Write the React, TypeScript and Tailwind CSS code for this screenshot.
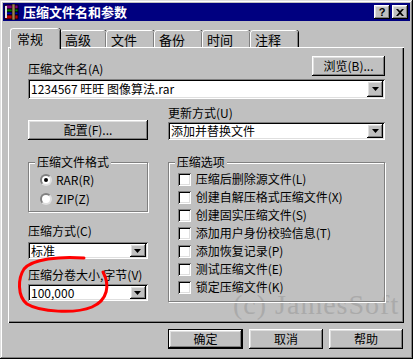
import type { ReactNode } from 'react'

const raised =
  'shadow-[inset_-1px_-1px_#000,inset_1px_1px_#fff,inset_-2px_-2px_#808080,inset_2px_2px_#dfdfdf]'
const sunken =
  'shadow-[inset_1px_1px_#808080,inset_-1px_-1px_#fff,inset_2px_2px_#000,inset_-2px_-2px_#dfdfdf]'

function RarIcon() {
  return (
    <svg width="16" height="16" viewBox="0 0 16 16" className="shrink-0">
      <rect x="1" y="1" width="13" height="4" fill="#800080" stroke="#000" strokeWidth="0.8" />
      <rect x="1" y="5" width="13" height="3" fill="#008000" stroke="#000" strokeWidth="0.8" />
      <rect x="1" y="8" width="13" height="3" fill="#0000c0" stroke="#000" strokeWidth="0.8" />
      <rect x="1" y="11" width="13" height="4" fill="#c00000" stroke="#000" strokeWidth="0.8" />
      <rect x="1" y="2" width="2" height="12" fill="#e0e0e0" />
      <rect x="8" y="0" width="3" height="16" fill="#a08050" stroke="#000" strokeWidth="0.6" />
    </svg>
  )
}

function TitleBtn({ children }: { children: ReactNode }) {
  return (
    <div className={`w-[16px] h-[14px] bg-[#c0c0c0] flex items-center justify-center ${raised}`}>
      {children}
    </div>
  )
}

function Arrow() {
  return (
    <div className={`w-[16px] self-stretch bg-[#c0c0c0] flex items-center justify-center ${raised}`}>
      <svg width="7" height="4" viewBox="0 0 7 4">
        <path d="M0 0h7L3.5 4z" fill="#000" />
      </svg>
    </div>
  )
}

function Combo({ value, h }: { value: string; h: string }) {
  return (
    <div className={`flex bg-white p-[2px] ${h} ${sunken}`}>
      <div className="flex-1 flex items-center pl-[1px] text-[12px] leading-[12px] whitespace-nowrap">
        {value}
      </div>
      <Arrow />
    </div>
  )
}

function Button({ children, w, def }: { children: ReactNode; w: string; def?: boolean }) {
  const inner = (
    <div className={`h-full w-full flex items-center justify-center text-[12px] bg-[#c0c0c0] ${raised}`}>
      {children}
    </div>
  )
  if (def) return <div className={`${w} h-[20px] border border-black`}>{inner}</div>
  return <div className={`${w} h-[20px]`}>{inner}</div>
}

function Group({ label, className, children }: { label: string; className: string; children: ReactNode }) {
  return (
    <div className={`relative border border-[#808080] shadow-[1px_1px_#fff,inset_1px_1px_#fff] ${className}`}>
      <span className="absolute -top-[8px] left-[6px] px-[2px] bg-[#c0c0c0] text-[12px] leading-[14px]">{label}</span>
      {children}
    </div>
  )
}

function Radio({ label, checked }: { label: string; checked?: boolean }) {
  return (
    <div className="h-[19px] flex items-center gap-[4px]">
      <div className="w-[12px] h-[12px] rounded-full bg-white border-2 border-t-[#808080] border-l-[#808080] border-b-[#dfdfdf] border-r-[#dfdfdf] flex items-center justify-center">
        {checked && <div className="w-[4px] h-[4px] rounded-full bg-black" />}
      </div>
      <span className="text-[12px] leading-[14px]">{label}</span>
    </div>
  )
}

function Check({ label }: { label: string }) {
  return (
    <div className="h-[18px] flex items-center gap-[5px]">
      <div className={`w-[13px] h-[13px] bg-white ${sunken}`} />
      <span className="text-[12px] leading-[14px] whitespace-nowrap">{label}</span>
    </div>
  )
}

const TABS = [
  { label: '高级', w: 'w-[46px]' },
  { label: '文件', w: 'w-[48px]' },
  { label: '备份', w: 'w-[48px]' },
  { label: '时间', w: 'w-[48px]' },
  { label: '注释', w: 'w-[48px]' },
]

const OPTIONS = [
  '压缩后删除源文件(L)',
  '创建自解压格式压缩文件(X)',
  '创建固实压缩文件(S)',
  '添加用户身份校验信息(T)',
  '添加恢复记录(P)',
  '测试压缩文件(E)',
  '锁定压缩文件(K)',
]

export default function App() {
  return (
    <div className="relative w-[413px] h-[359px] bg-[#c0c0c0] p-[3px] text-black font-['Noto_Sans_CJK_SC','Liberation_Sans',sans-serif] shadow-[inset_-1px_-1px_#000,inset_1px_1px_#dfdfdf,inset_-2px_-2px_#808080,inset_2px_2px_#fff]">
      {/* Title bar */}
      <div className="h-[18px] bg-[#000080] flex items-center pl-[1px] pr-[2px]">
        <RarIcon />
        <span className="ml-[3px] text-white font-bold text-[13px] leading-[16px]">压缩文件名和参数</span>
        <div className="ml-auto flex gap-[2px]">
          <TitleBtn>
            <span className="text-[11px] font-bold leading-none font-['Liberation_Sans',sans-serif]">?</span>
          </TitleBtn>
          <TitleBtn>
            <svg width="8" height="7" viewBox="0 0 8 7">
              <path d="M0 0h2l2 2 2-2h2L5 3.5 8 7H6L4 5 2 7H0l3-3.5z" fill="#000" />
            </svg>
          </TitleBtn>
        </div>
      </div>

      {/* Tabs */}
      <div className="mt-[7px] ml-[7px] flex items-end h-[19px]">
        <div className="relative z-10 w-[50px] h-[21px] -mb-[2px] bg-[#c0c0c0] rounded-t-[3px] border-t border-l border-white shadow-[inset_-1px_0_#808080,1px_0_#000] flex items-start pl-[6px] pt-[2px] text-[13px] leading-[16px]">
          常规
        </div>
        {TABS.map((t) => (
          <div
            key={t.label}
            className={`${t.w} h-[17px] bg-[#c0c0c0] rounded-t-[3px] border-t border-l border-white shadow-[inset_-1px_0_#808080,1px_0_#000] flex items-start pl-[4px] pt-[1px] text-[13px] leading-[15px]`}
          >
            {t.label}
          </div>
        ))}
      </div>

      {/* Panel */}
      <div className="relative ml-[5px] w-[396px] h-[276px] pt-[8px] pl-[20px] pr-[19px] shadow-[inset_1px_1px_#fff,inset_-1px_-1px_#000,inset_-2px_-2px_#808080]">
        <div className="absolute left-[225px] top-[242px] text-[28px] leading-[32px] tracking-[1px] text-[#aaaaaa] font-['Liberation_Serif',serif] whitespace-nowrap">
          (c) JamesSoft
        </div>

        <div className="h-[21px] flex justify-between items-end">
          <span className="text-[12px] leading-[14px]">压缩文件名(A)</span>
          <Button w="w-[73px]">浏览(B)...</Button>
        </div>
        <div className="mt-[3px]">
          <Combo value="1234567 旺旺 图像算法.rar" h="h-[20px]" />
        </div>

        <div className="mt-[7px] flex gap-[20px] items-end">
          <div className="w-[120px]">
            <Button w="w-[120px]">配置(F)...</Button>
          </div>
          <div className="flex-1">
            <div className="text-[12px] leading-[14px]">更新方式(U)</div>
            <div className="mt-[2px]">
              <Combo value="添加并替换文件" h="h-[18px]" />
            </div>
          </div>
        </div>

        <div className="mt-[22px] flex gap-[20px] items-start">
          <div className="w-[120px]">
            <Group label="压缩文件格式" className="h-[50px] pt-[7px] pl-[11px]">
              <Radio label="RAR(R)" checked />
              <Radio label="ZIP(Z)" />
            </Group>
            <div className="mt-[12px] text-[12px] leading-[14px]">压缩方式(C)</div>
            <div className="mt-[4px]">
              <Combo value="标准" h="h-[17px]" />
            </div>
            <div className="mt-[9px] text-[12px] leading-[14px]">压缩分卷大小,字节(V)</div>
            <div className="mt-[2px]">
              <Combo value="100,000" h="h-[17px]" />
            </div>
          </div>
          <Group label="压缩选项" className="w-[218px] h-[140px] pt-[7px] pl-[9px]">
            {OPTIONS.map((o) => (
              <Check key={o} label={o} />
            ))}
          </Group>
        </div>
      </div>

      {/* Bottom buttons */}
      <div className="mt-[6px] pr-[7px] flex justify-end gap-[6px]">
        <Button w="w-[75px]" def>
          确定
        </Button>
        <Button w="w-[74px]">取消</Button>
        <Button w="w-[74px]">帮助</Button>
      </div>

      {/* Hand-drawn red mark */}
      <svg className="absolute left-0 top-0 pointer-events-none" width="413" height="359">
        <path
          d="M103 272C110 285 108 300 92 307C75 314 40 312 27 304C17 296 18 278 24 269C32 259 60 256 84 258"
          fill="none"
          stroke="#ff0000"
          strokeWidth="3"
          strokeLinecap="round"
        />
      </svg>
    </div>
  )
}
